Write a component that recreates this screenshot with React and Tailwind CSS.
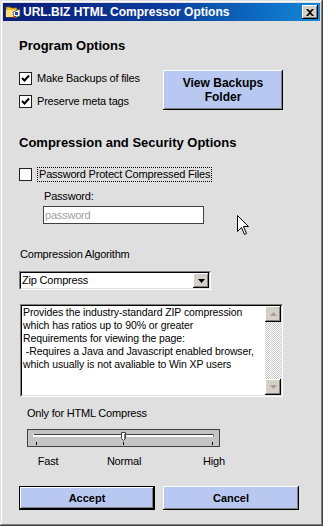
import React from "react";

const raised =
  "shadow-[inset_-1px_-1px_#000,inset_1px_1px_#fff,inset_-2px_-2px_#808080]";

function CheckBox({ checked }) {
  return (
    <span className="flex h-[13px] w-[13px] shrink-0 items-center justify-center border border-[#202020] bg-white">
      {checked && (
        <svg width="9" height="9" viewBox="0 0 9 9">
          <path d="M1 4 L3.5 6.5 L8 1.5" fill="none" stroke="#000" strokeWidth="2" />
        </svg>
      )}
    </span>
  );
}

function Sunken({ className, children }) {
  return (
    <div className={"border border-t-[#808080] border-l-[#808080] border-b-white border-r-white " + className}>
      <div className="flex h-full w-full border border-t-[#000] border-l-[#000] border-b-[#dfdfdf] border-r-[#dfdfdf] bg-white">
        {children}
      </div>
    </div>
  );
}

function ScrollArrow({ up }) {
  return (
    <div className={"flex h-[16px] w-[16px] items-center justify-center bg-[#d4d0c8] " + raised}>
      <svg width="7" height="4" viewBox="0 0 7 4">
        {up ? (
          <path d="M0 4 L3.5 0 L7 4 Z" fill="#a0a0a0" />
        ) : (
          <path d="M0 0 L3.5 4 L7 0 Z" fill="#a0a0a0" />
        )}
      </svg>
    </div>
  );
}

function TitleIcon() {
  return (
    <svg width="16" height="16" viewBox="0 0 16 16">
      <path d="M1 3 L5 3 L6 4 L12 4 L12 13 L1 13 Z" fill="#f0c040" stroke="#806000" strokeWidth="0.8" />
      <path d="M1 6 L13 6 L12 13 L1 13 Z" fill="#ffe080" />
      <path d="M8 8 L15 5 L15 12 L9 14 Z" fill="#ffffff" stroke="#404040" strokeWidth="0.8" />
      <rect x="10" y="8" width="3" height="3" fill="#2040c0" />
      <rect x="9" y="12" width="2" height="2" fill="#d02020" />
      <rect x="12" y="12" width="2" height="1" fill="#20a040" />
    </svg>
  );
}

function Slider() {
  return (
    <div className="h-[18px] w-[193px] border border-[#404040] bg-[#c4c4c4]">
      <svg width="191" height="16" viewBox="0 0 191 16">
        <rect x="5" y="4" width="181" height="1" fill="#404040" />
        <rect x="5" y="5" width="181" height="2" fill="#ffffff" />
        <rect x="5" y="4" width="1" height="3" fill="#ffffff" />
        <rect x="185" y="4" width="1" height="3" fill="#808080" />
        <path d="M93.5 2.5 L97.5 2.5 L97.5 8.5 L95.5 10.5 L93.5 8.5 Z" fill="#ffffff" stroke="#404040" />
        <rect x="96" y="4" width="1" height="5" fill="#808080" />
        <rect x="8" y="12" width="1" height="3" fill="#000" />
        <rect x="95" y="12" width="1" height="3" fill="#000" />
        <rect x="184" y="12" width="1" height="3" fill="#000" />
      </svg>
    </div>
  );
}

export default function App() {
  return (
    <div className="relative h-[526px] w-[323px] bg-[#dfdfdf] p-[3px] font-['Liberation_Sans',Arial,sans-serif] text-[11px] leading-[13px] tracking-[-0.2px] text-black shadow-[inset_-1px_-1px_#404040,inset_1px_1px_#dfdfdf,inset_-2px_-2px_#808080,inset_2px_2px_#ffffff]">
      {/* title bar */}
      <div className="flex h-[18px] items-center bg-gradient-to-r from-[#0a1c78] via-[#0c3c9c] to-[#1488d8] pl-[2px] tracking-normal">
        <TitleIcon />
        <span className="ml-[2px] text-[12px] font-bold leading-[18px] text-white">
          URL.BIZ HTML Compressor Options
        </span>
        <div className={"ml-auto mr-[2px] flex h-[14px] w-[16px] items-center justify-center bg-[#d4d0c8] " + raised}>
          <svg width="8" height="7" viewBox="0 0 8 7">
            <path d="M0 0 L2 0 L4 2 L6 0 L8 0 L5 3.5 L8 7 L6 7 L4 5 L2 7 L0 7 L3 3.5 Z" fill="#000" />
          </svg>
        </div>
      </div>

      {/* client area */}
      <div className="px-[16px] pt-[17px]">
        <h2 className="text-[13px] font-bold leading-[16px] tracking-normal">Program Options</h2>

        <div className="mt-[16px] flex">
          <div className="flex w-[144px] flex-col gap-[10px] pt-[2px]">
            <label className="flex h-[13px] items-center gap-[5px]">
              <CheckBox checked />
              <span>Make Backups of files</span>
            </label>
            <label className="flex h-[13px] items-center gap-[5px]">
              <CheckBox checked />
              <span>Preserve meta tags</span>
            </label>
          </div>
          <button
            type="button"
            className={"flex h-[40px] w-[120px] flex-col items-center justify-center bg-[#b8c8f0] text-[12px] font-bold leading-[14px] tracking-normal " + raised}
          >
            <span>View Backups</span>
            <span>Folder</span>
          </button>
        </div>

        <h2 className="mt-[25px] text-[13px] font-bold leading-[16px] tracking-normal">
          Compression and Security Options
        </h2>

        <label className="mt-[16px] flex h-[15px] items-center">
          <CheckBox />
          <span className="ml-[5px] border border-dotted border-black pl-px pr-px leading-[13px]">
            Password Protect Compressed Files
          </span>
        </label>

        <div className="ml-[25px] mt-[8px]">Password:</div>
        <div className="ml-[24px] mt-[3px] flex h-[18px] w-[161px] items-center border border-[#404040] bg-white px-[1px] text-[#a0a0a0]">
          password
        </div>

        <div className="ml-px mt-[24px]">Compression Algorithm</div>
        <Sunken className="mt-[10px] h-[19px] w-[192px]">
          <span className="flex-1 pl-[1px] leading-[15px]">Zip Compress</span>
          <div className={"flex h-[15px] w-[16px] items-center justify-center bg-[#d4d0c8] " + raised}>
            <svg width="7" height="4" viewBox="0 0 7 4">
              <path d="M0 0 L3.5 4 L7 0 Z" fill="#000" />
            </svg>
          </div>
        </Sunken>

        <Sunken className="ml-px mt-[14px] h-[93px] w-[263px]">
          <div className="flex-1 whitespace-nowrap pl-[1px] text-[10.5px] leading-[13px] tracking-[-0.1px]">
            <p>Provides the industry-standard ZIP compression</p>
            <p>which has ratios up to 90% or greater</p>
            <p>Requirements for viewing the page:</p>
            <p>&nbsp;-Requires a Java and Javascript enabled browser,</p>
            <p>which usually is not avaliable to Win XP users</p>
          </div>
          <div className="flex w-[16px] flex-col">
            <ScrollArrow up />
            <div className="flex-1 bg-[repeating-conic-gradient(#c8c8c8_0%_25%,#ffffff_0%_50%)] bg-[length:2px_2px]" />
            <ScrollArrow />
          </div>
        </Sunken>

        <div className="ml-[8px] mt-[10px]">Only for HTML Compress</div>
        <div className="ml-[8px] mt-[9px]">
          <Slider />
        </div>
        <div className="mt-[8px] grid grid-cols-[58px_94px_86px] text-center">
          <span>Fast</span>
          <span>Normal</span>
          <span>High</span>
        </div>

        <div className="mt-[18px] flex gap-[8px] tracking-normal">
          <button
            type="button"
            className="h-[24px] w-[136px] border border-black bg-[#b8c8f0] text-[11px] font-bold shadow-[inset_-1px_-1px_#000,inset_1px_1px_#fff,inset_-2px_-2px_#808080]"
          >
            Accept
          </button>
          <button
            type="button"
            className={"h-[24px] w-[136px] bg-[#b8c8f0] text-[11px] font-bold " + raised}
          >
            Cancel
          </button>
        </div>
      </div>

      {/* mouse pointer over the dialog */}
      <svg
        className="pointer-events-none absolute left-[237px] top-[215px]"
        width="13"
        height="21"
        viewBox="0 0 13 21"
      >
        <path
          d="M0.5 0.5 L0.5 16.5 L4.5 12.5 L7.5 19.5 L9.5 18.5 L6.5 11.5 L11.5 11.5 Z"
          fill="#ffffff"
          stroke="#000"
        />
      </svg>
    </div>
  );
}
